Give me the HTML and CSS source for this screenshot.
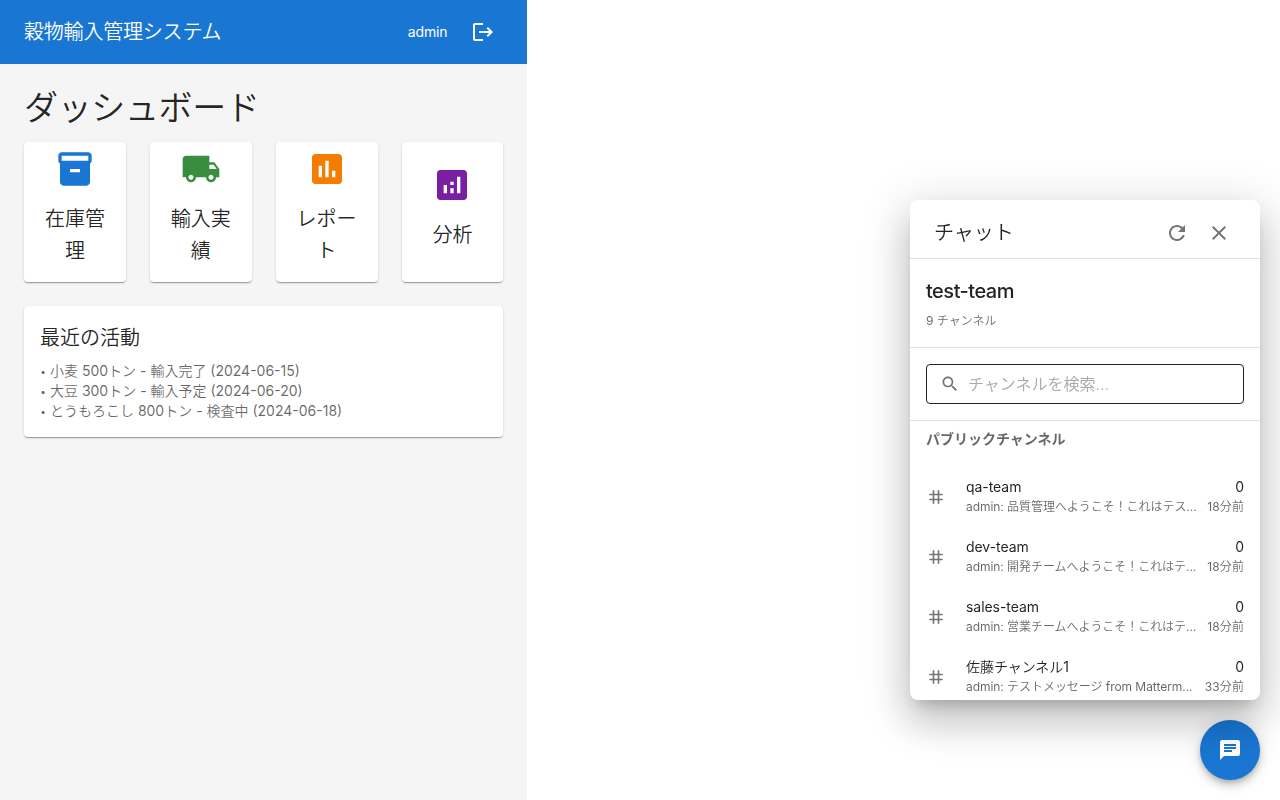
FILE: index.html
```html
<!DOCTYPE html>
<html lang="ja">
<head>
<meta charset="utf-8">
<title>穀物輸入管理システム</title>
<link rel="stylesheet" href="styles.css">
</head>
<body>
<div class="app">
  <header class="appbar">
    <h1 class="appbar-title">穀物輸入管理システム</h1>
    <span class="user">admin</span>
    <button class="logout" aria-label="logout"><svg class="i24" viewBox="0 0 24 24"><path d="M17 7l-1.41 1.41L18.17 11H8v2h10.17l-2.58 2.58L17 17l5-5zM4 5h8V3H4c-1.1 0-2 .9-2 2v14c0 1.1.9 2 2 2h8v-2H4V5z"/></svg></button>
  </header>
  <main class="main">
    <h2 class="page-title">ダッシュボード</h2>
    <div class="cards">
      <div class="card"><svg class="i40 blue" viewBox="0 0 24 24"><path d="M20 2H4c-1 0-2 .9-2 2v3.01c0 .72.43 1.34 1 1.69V20c0 1.1 1.1 2 2 2h14c.9 0 2-.9 2-2V8.7c.57-.35 1-.97 1-1.69V4c0-1.1-1-2-2-2zm-5 12H9v-2h6v2zm5-7H4V4h16v3z"/></svg><h3 class="card-label">在庫管理</h3></div>
      <div class="card"><svg class="i40 green" viewBox="0 0 24 24"><path d="M20 8h-3V4H3c-1.1 0-2 .9-2 2v11h2c0 1.66 1.34 3 3 3s3-1.34 3-3h6c0 1.66 1.34 3 3 3s3-1.34 3-3h2v-5l-3-4zM6 18.500c-.83 0-1.500-.67-1.500-1.500s.67-1.500 1.500-1.500 1.500.67 1.500 1.500-.67 1.500-1.500 1.500zm13.500-9l1.960 2.500H17V9.500h2.500zm-1.500 9c-.83 0-1.500-.67-1.500-1.500s.67-1.500 1.500-1.500 1.500.67 1.500 1.500-.67 1.500-1.500 1.500z"/></svg><h3 class="card-label">輸入実績</h3></div>
      <div class="card"><svg class="i40 orange" viewBox="0 0 24 24"><path d="M19 3H5c-1.100 0-2 .9-2 2v14c0 1.100.9 2 2 2h14c1.100 0 2-.9 2-2V5c0-1.100-.9-2-2-2zM9 17H7v-7h2v7zm4 0h-2V7h2v10zm4 0h-2v-4h2v4z"/></svg><h3 class="card-label">レポート</h3></div>
      <div class="card"><svg class="i40 purple" viewBox="0 0 24 24"><path d="M19 3H5c-1.100 0-2 .9-2 2v14c0 1.100.9 2 2 2h14c1.100 0 2-.9 2-2V5c0-1.100-.9-2-2-2zM9 17H7v-5h2v5zm4 0h-2v-3h2v3zm0-5h-2v-2h2v2zm4 5h-2V7h2v10z"/></svg><h3 class="card-label">分析</h3></div>
    </div>
    <section class="activity">
      <h3 class="activity-title">最近の活動</h3>
      <p class="activity-row"><span class="bullet">•</span> 小麦 <span class="latin">500</span>トン <span class="latin">-</span> 輸入完了 <span class="latin">(2024-06-15)</span></p>
      <p class="activity-row"><span class="bullet">•</span> 大豆 <span class="latin">300</span>トン <span class="latin">-</span> 輸入予定 <span class="latin">(2024-06-20)</span></p>
      <p class="activity-row"><span class="bullet">•</span> とうもろこし <span class="latin">800</span>トン <span class="latin">-</span> 検査中 <span class="latin">(2024-06-18)</span></p>
    </section>
  </main>
</div>

<button class="fab" aria-label="chat"><svg class="i24" viewBox="0 0 24 24"><path d="M20 2H4c-1.100 0-1.990.9-1.990 2L2 22l4-4h14c1.100 0 2-.9 2-2V4c0-1.100-.9-2-2-2zM6 9h12v2H6V9zm8 5H6v-2h8v2zm4-6H6V6h12v2z"/></svg></button>

<aside class="chat">
  <header class="chat-head">
    <h2 class="chat-title">チャット</h2>
    <button class="tool" aria-label="refresh"><svg class="i24" viewBox="0 0 24 24"><path d="M17.650 6.350C16.200 4.900 14.210 4 12 4c-4.420 0-7.990 3.580-7.990 8s3.570 8 7.990 8c3.730 0 6.840-2.550 7.730-6h-2.080c-.82 2.330-3.040 4-5.650 4-3.310 0-6-2.690-6-6s2.690-6 6-6c1.660 0 3.140.69 4.220 1.780L13 11h7V4l-2.350 2.350z"/></svg></button>
    <button class="tool" aria-label="close"><svg class="i24" viewBox="0 0 24 24"><path d="M19 6.410L17.590 5 12 10.590 6.410 5 5 6.410 10.590 12 5 17.590 6.410 19 12 13.410 17.590 19 19 17.590 13.410 12z"/></svg></button>
  </header>
  <section class="team">
    <h3 class="team-name">test-team</h3>
    <p class="team-count"><span class="latin">9</span> チャンネル</p>
  </section>
  <div class="search-wrap">
    <div class="search"><svg class="i20" viewBox="0 0 24 24"><path d="M15.500 14h-.79l-.28-.27C15.410 12.590 16 11.110 16 9.500 16 5.910 13.090 3 9.500 3S3 5.910 3 9.500 5.910 16 9.500 16c1.610 0 3.090-.59 4.230-1.570l.27.28v.79l5 4.990L20.490 19l-4.990-5zm-6 0C7.010 14 5 11.990 5 9.500S7.010 5 9.500 5 14 7.010 14 9.500 11.990 14 9.500 14z"/></svg><span class="placeholder">チャンネルを検索...</span></div>
  </div>
  <h4 class="group">パブリックチャンネル</h4>
  <ul class="channels">
    <li class="channel"><svg class="i20" viewBox="0 0 24 24"><path d="M20 10V8h-4V4h-2v4h-4V4H8v4H4v2h4v4H4v2h4v4h2v-4h4v4h2v-4h4v-2h-4v-4h4zm-6 4h-4v-4h4v4z"/></svg><div class="body"><div class="line"><span class="name latin">qa-team</span><span class="name latin">0</span></div><div class="line"><span class="preview"><span class="latin">admin:</span> 品質管理へようこそ！これはテス<span class="latin">...</span></span><span class="time"><span class="latin">18</span>分前</span></div></div></li>
    <li class="channel"><svg class="i20" viewBox="0 0 24 24"><path d="M20 10V8h-4V4h-2v4h-4V4H8v4H4v2h4v4H4v2h4v4h2v-4h4v4h2v-4h4v-2h-4v-4h4zm-6 4h-4v-4h4v4z"/></svg><div class="body"><div class="line"><span class="name latin">dev-team</span><span class="name latin">0</span></div><div class="line"><span class="preview"><span class="latin">admin:</span> 開発チームへようこそ！これはテ<span class="latin">...</span></span><span class="time"><span class="latin">18</span>分前</span></div></div></li>
    <li class="channel"><svg class="i20" viewBox="0 0 24 24"><path d="M20 10V8h-4V4h-2v4h-4V4H8v4H4v2h4v4H4v2h4v4h2v-4h4v4h2v-4h4v-2h-4v-4h4zm-6 4h-4v-4h4v4z"/></svg><div class="body"><div class="line"><span class="name latin">sales-team</span><span class="name latin">0</span></div><div class="line"><span class="preview"><span class="latin">admin:</span> 営業チームへようこそ！これはテ<span class="latin">...</span></span><span class="time"><span class="latin">18</span>分前</span></div></div></li>
    <li class="channel"><svg class="i20" viewBox="0 0 24 24"><path d="M20 10V8h-4V4h-2v4h-4V4H8v4H4v2h4v4H4v2h4v4h2v-4h4v4h2v-4h4v-2h-4v-4h4zm-6 4h-4v-4h4v4z"/></svg><div class="body"><div class="line"><span class="name">佐藤チャンネル<span class="latin">1</span></span><span class="name latin">0</span></div><div class="line"><span class="preview"><span class="latin">admin:</span> テストメッセージ <span class="latin">from Matterm...</span></span><span class="time"><span class="latin">33</span>分前</span></div></div></li>
  </ul>
</aside>
</body>
</html>
```
FILE: styles.css
```css
* { box-sizing: border-box; }
body { margin: 0; height: 800px; overflow: hidden; background: #fff; color: rgba(0,0,0,.87); font-family: Inter, "Noto Sans CJK JP", sans-serif; font-weight: 350; }
h1, h2, h3, h4, p, ul { margin: 0; padding: 0; font-weight: 350; list-style: none; }
button { border: 0; padding: 0; background: none; color: inherit; display: flex; align-items: center; justify-content: center; }
svg { fill: currentColor; display: block; flex-shrink: 0; }
.latin { font-weight: 400; }
.i20 { width: 20px; height: 20px; }
.i24 { width: 24px; height: 24px; }
.i40 { width: 40px; height: 40px; }

.app { width: 527.4px; height: 800px; background: #f5f5f5; }
.appbar { height: 64px; padding: 0 24px; display: flex; align-items: center; background: #1976d2; color: #fff; }
.appbar-title { flex: 1; font-size: 20px; line-height: 32px; letter-spacing: -.2px; }
.user { font-size: 14px; line-height: 20px; letter-spacing: -.15px; font-weight: 400; }
.logout { width: 40px; height: 40px; margin: 0 0 0 16px; }
.main { padding: 24px; }
.page-title { font-size: 34px; line-height: 40px; letter-spacing: -.35px; margin-bottom: 14px; }
.cards { display: grid; grid-template-columns: repeat(4, 1fr); gap: 24px; }
.card, .activity { background: #fff; border-radius: 4px; box-shadow: 0 2px 1px -1px rgba(0,0,0,.2), 0 1px 1px rgba(0,0,0,.14), 0 1px 3px rgba(0,0,0,.12); }
.card { height: 140px; padding: 0 16px; display: flex; flex-direction: column; align-items: center; justify-content: center; text-align: center; }
.card-label { margin: 14px 0 8px; font-size: 20px; line-height: 32px; }
.blue { color: #1976d2; }
.green { color: #388e3c; }
.orange { color: #f57c00; }
.purple { color: #7b1fa2; }
.activity { margin-top: 24px; height: 131px; padding: 16px; }
.activity-title { font-size: 20px; line-height: 32px; margin-bottom: 7px; }
.activity-row { font-size: 14px; line-height: 20px; color: rgba(0,0,0,.6); }
.bullet { display: inline-block; width: 6px; font-size: 10px; line-height: 10px; vertical-align: 1px; text-align: center; font-weight: 400; }

.fab { position: fixed; right: 20px; bottom: 20px; width: 60px; height: 60px; border-radius: 50%; background: #1976d2; color: #fff; box-shadow: 0 3px 5px -1px rgba(0,0,0,.2), 0 6px 10px rgba(0,0,0,.14), 0 1px 18px rgba(0,0,0,.12); }
.chat { position: fixed; right: 20px; bottom: 100px; width: 350px; height: 500px; overflow: hidden; background: #fff; border-radius: 8px; box-shadow: 0 11px 15px -7px rgba(0,0,0,.2), 0 24px 38px 3px rgba(0,0,0,.14), 0 9px 46px 8px rgba(0,0,0,.12); }
.chat-head { height: 59px; padding: 8px 24px 0; display: flex; align-items: center; gap: 8px; border-bottom: 1px solid #e0e0e0; }
.chat-title { flex: 1; font-size: 20px; line-height: 32px; }
.tool { width: 34px; height: 34px; color: #757575; }
.team { height: 89px; padding: 16px; border-bottom: 1px solid #e0e0e0; }
.team-name { font-size: 20px; line-height: 32px; letter-spacing: -.5px; font-weight: 500; }
.team-count { margin-top: 4px; font-size: 12px; line-height: 20px; color: rgba(0,0,0,.6); }
.search-wrap { height: 73px; padding: 16px; border-bottom: 1px solid #e0e0e0; }
.search { height: 40px; padding: 0 13px; display: flex; align-items: center; gap: 8px; border: 1px solid #212121; border-radius: 4px; color: #757575; }
.placeholder { font-size: 16px; line-height: 23px; color: #a8a8a8; }
.group { padding: 8px 16px; height: 46px; font-size: 14px; line-height: 20px; font-weight: 700; color: rgba(0,0,0,.6); }
.channel { height: 60px; padding: 0 16px; display: flex; align-items: center; gap: 20px; color: #757575; }
.body { flex: 1; min-width: 0; }
.line { display: flex; justify-content: space-between; }
.name { font-size: 14px; line-height: 20px; letter-spacing: -.05px; color: rgba(0,0,0,.87); }
.preview, .time { font-size: 12px; line-height: 20px; color: rgba(0,0,0,.6); white-space: nowrap; }
.preview { letter-spacing: -.05px; }
.time { letter-spacing: .1px; }
```
